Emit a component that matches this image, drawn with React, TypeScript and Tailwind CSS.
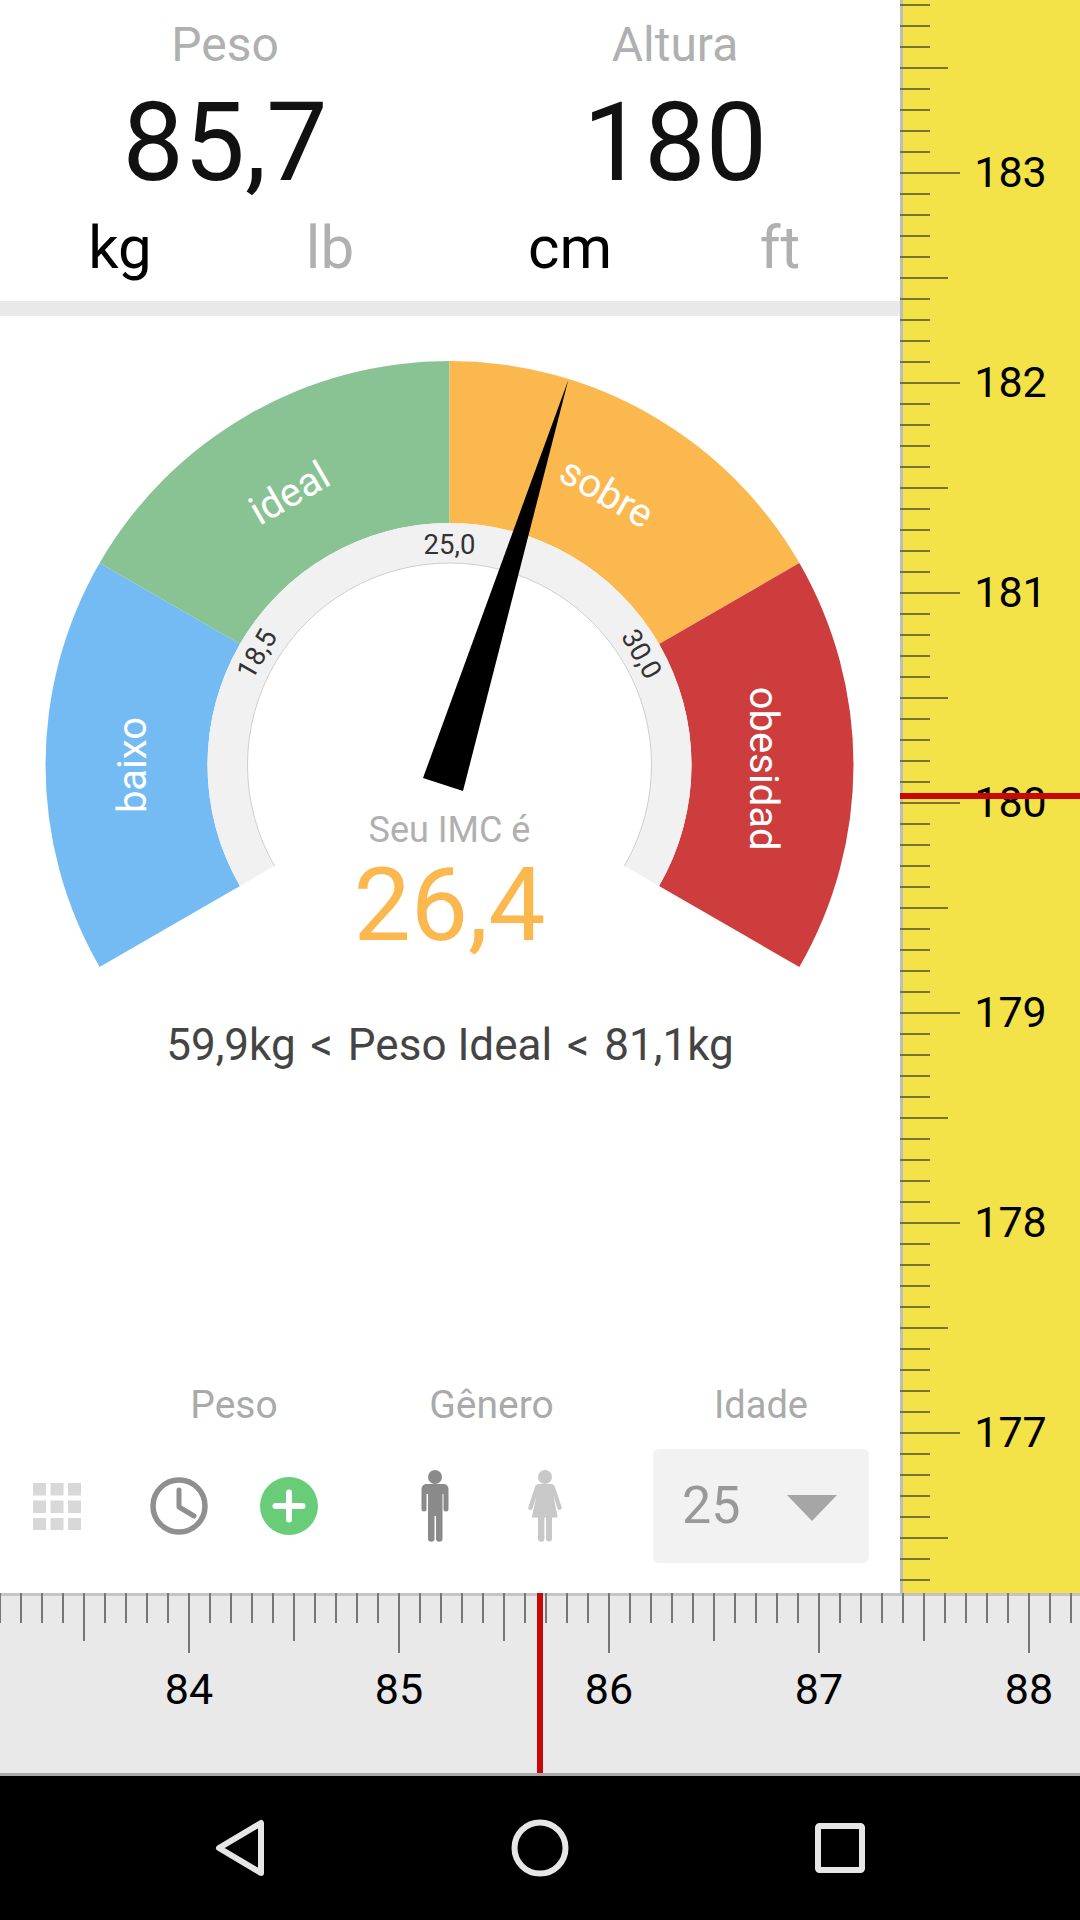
import React from "react";

const cx = 449.5;
const cy = 765;
const pt = (r: number, deg: number) => {
  const a = (deg * Math.PI) / 180;
  return [cx + r * Math.cos(a), cy - r * Math.sin(a)];
};
const sector = (r1: number, r2: number, a1: number, a2: number) => {
  const [x1, y1] = pt(r2, a1);
  const [x2, y2] = pt(r2, a2);
  const [x3, y3] = pt(r1, a2);
  const [x4, y4] = pt(r1, a1);
  const large = Math.abs(a2 - a1) > 180 ? 1 : 0;
  return `M${x1} ${y1}A${r2} ${r2} 0 ${large} 1 ${x2} ${y2}L${x3} ${y3}A${r1} ${r1} 0 ${large} 0 ${x4} ${y4}Z`;
};

const segments = [
  { from: 210, to: 150, fill: "#75bbf3" },
  { from: 150, to: 90, fill: "#89c393" },
  { from: 90, to: 30, fill: "#fab84e" },
  { from: 30, to: -30, fill: "#cd3d3d" },
];
const bandLabels = [
  { t: "baixo", a: 180, r: 304, rot: -90 },
  { t: "ideal", a: 120.5, r: 302, rot: -30 },
  { t: "sobre", a: 60, r: 301, rot: 30 },
  { t: "obesidad", a: -0.7, r: 301, rot: 90 },
];
const ringLabels = [
  { t: "18,5", a: 150, r: 213, rot: -60 },
  { t: "25,0", a: 90, r: 211, rot: 0 },
  { t: "30,0", a: 30, r: 212.5, rot: 60 },
];

function Gauge() {
  return (
    <svg width={900} height={684} viewBox="0 316 900 684" className="block">
      {segments.map((s) => (
        <path key={s.fill} d={sector(242, 404, s.from, s.to)} fill={s.fill} />
      ))}
      <path d={sector(202, 242, 210, -30)} fill="#f1f1f1" />
      <path
        d={(() => {
          const [x1, y1] = pt(202, 210);
          const [x2, y2] = pt(202, -30);
          return `M${x1} ${y1}A202 202 0 1 1 ${x2} ${y2}`;
        })()}
        fill="none"
        stroke="#cfcfcf"
        strokeWidth={1}
      />
      {bandLabels.map((l) => {
        const [x, y] = pt(l.r, l.a);
        return (
          <text
            key={l.t}
            x={x}
            y={y}
            textAnchor="middle"
            fontSize={40}
            fill="#ffffff"
            transform={`rotate(${l.rot} ${x} ${y})`}
          >
            {l.t}
          </text>
        );
      })}
      {ringLabels.map((l) => {
        const [x, y] = pt(l.r, l.a);
        return (
          <text
            key={l.t}
            x={x}
            y={y}
            textAnchor="middle"
            fontSize={27.5}
            fill="#333333"
            transform={`rotate(${l.rot} ${x} ${y})`}
          >
            {l.t}
          </text>
        );
      })}
      <polygon points="568.2,380.2 423,778 463,791" fill="#000000" />
      <text x={449.5} y={842} textAnchor="middle" fontSize={36} fill="#b0b0b0">
        Seu IMC é
      </text>
      <text x={449.5} y={940} textAnchor="middle" fontSize={102} fill="#fab84e">
        26,4
      </text>
    </svg>
  );
}

function VerticalRuler() {
  const ticks = Array.from({ length: 76 }, (_, i) => i - 8);
  return (
    <svg width={180} height={1593} viewBox="900 0 180 1593" className="block shrink-0">
      <rect x={900} y={0} width={180} height={1593} fill="#f3e348" />
      <rect x={900} y={0} width={3} height={1593} fill="#bdbdbd" />
      {ticks.map((idx) => {
        const y = 173 + 21 * idx;
        const major = idx % 10 === 0;
        const mid = !major && idx % 5 === 0;
        const end = major ? 960 : mid ? 948 : 930;
        return <rect key={idx} x={900} y={y - 1} width={end - 900} height={2} fill="#7a7430" />;
      })}
      {[183, 182, 181, 180, 179, 178, 177].map((v, i) => (
        <text key={v} x={1010.5} y={186.5 + 210 * i} textAnchor="middle" fontSize={43} fill="#000000">
          {v}
        </text>
      ))}
      <rect x={900} y={793} width={180} height={6} fill="#c80808" />
    </svg>
  );
}

function HorizontalRuler() {
  const ticks = Array.from({ length: 52 }, (_, i) => i);
  return (
    <svg width={1080} height={183} viewBox="0 1593 1080 183" className="block shrink-0">
      <rect x={0} y={1593} width={1080} height={183} fill="#e9e9e9" />
      <rect x={0} y={1593} width={1080} height={3} fill="#c4c4c4" />
      <rect x={0} y={1773} width={1080} height={3} fill="#aaaaaa" />
      {ticks.map((k) => {
        const major = (k - 9) % 10 === 0;
        const mid = !major && (k - 9) % 5 === 0;
        const end = major ? 1653 : mid ? 1641 : 1623;
        return <rect key={k} x={21 * k - 1} y={1593} width={2} height={end - 1593} fill="#777777" />;
      })}
      {[84, 85, 86, 87, 88].map((v, i) => (
        <text key={v} x={189 + 210 * i} y={1704} textAnchor="middle" fontSize={43} fill="#000000">
          {v}
        </text>
      ))}
      <rect x={537} y={1593} width={6} height={180} fill="#c80808" />
    </svg>
  );
}

function GridIcon() {
  const xs = [0, 17.5, 35];
  return (
    <svg width={48} height={47} viewBox="0 0 48 47" className="block">
      {xs.map((y) =>
        xs.map((x) => <rect key={`${x}-${y}`} x={x} y={y} width={13} height={12.5} fill="#d8d8d8" />)
      )}
    </svg>
  );
}

function ClockIcon() {
  return (
    <svg width={58} height={58} viewBox="0 0 58 58" className="block">
      <circle cx={29} cy={29} r={26} fill="none" stroke="#8f8f8f" strokeWidth={5.5} />
      <path
        d="M29 13V30L44 39"
        fill="none"
        stroke="#8f8f8f"
        strokeWidth={5}
        strokeLinecap="round"
        strokeLinejoin="round"
      />
    </svg>
  );
}

function PlusIcon() {
  return (
    <svg width={58} height={58} viewBox="0 0 58 58" className="block">
      <circle cx={29} cy={29} r={29} fill="#69cc79" />
      <path d="M29 15.5V42.5M15.5 29H42.5" stroke="#ffffff" strokeWidth={6} strokeLinecap="round" />
    </svg>
  );
}

function ManIcon() {
  return (
    <svg width={28} height={72} viewBox="421 1471 28 72" className="block">
      <circle cx={435} cy={1478} r={7} fill="#8a8a8a" />
      <path
        d="M426.5 1485H443.5a5 5 0 0 1 5 5V1510a2.5 2.5 0 0 1-5 0V1495H442.5V1539.5a3 3 0 0 1-6.5 0V1517H434.5V1539.5a3 3 0 0 1-6.5 0V1495H426.5V1510a2.5 2.5 0 0 1-5 0V1490a5 5 0 0 1 5-5Z"
        fill="#8a8a8a"
      />
    </svg>
  );
}

function WomanIcon() {
  return (
    <svg width={34} height={72} viewBox="528 1471 34 72" className="block">
      <circle cx={545} cy={1478} r={7} fill="#c8c8c8" />
      <path
        d="M539 1485H551Q554 1485 555 1488L561.6 1508a2.2 2.2 0 0 1-4 1.8L553.5 1497L557.7 1518.5H552V1539.5a3 3 0 0 1-6 0V1518.5H544.4V1539.5a3 3 0 0 1-6.4 0V1518.5H531.7L536.5 1497L532.4 1509.8a2.2 2.2 0 0 1-4-1.8L535 1488Q536 1485 539 1485Z"
        fill="#c8c8c8"
      />
    </svg>
  );
}

function NavBar() {
  return (
    <div className="flex h-[144px] shrink-0 items-center bg-black">
      <svg width={1080} height={144} viewBox="0 1776 1080 144" className="block">
        <path
          d="M261 1823V1873L219 1848Z"
          fill="none"
          stroke="#e6e6e6"
          strokeWidth={6}
          strokeLinejoin="round"
        />
        <circle cx={540} cy={1848} r={25.5} fill="none" stroke="#e6e6e6" strokeWidth={6} />
        <rect x={818} y={1826} width={44} height={44} rx={1.5} fill="none" stroke="#e6e6e6" strokeWidth={6} />
      </svg>
    </div>
  );
}

export default function App() {
  return (
    <div className="flex h-[1920px] w-[1080px] flex-col overflow-hidden bg-white font-[Roboto,sans-serif]">
      <div className="flex h-[1593px] shrink-0">
        <div className="flex w-[900px] shrink-0 flex-col">
          <div className="grid h-[301px] grid-cols-2 pt-[15px]">
            <div className="flex flex-col items-center">
              <div className="text-[48px] leading-[60px] text-[#b0b0b0]">Peso</div>
              <div className="mt-[13px] text-[109px] leading-[110px] text-[#111111]">85,7</div>
              <div className="mt-[20px] flex">
                <div className="w-[210px] text-center text-[60px] leading-[60px] text-black">kg</div>
                <div className="w-[210px] text-center text-[60px] leading-[60px] text-[#b0b0b0]">lb</div>
              </div>
            </div>
            <div className="flex flex-col items-center">
              <div className="text-[48px] leading-[60px] text-[#b0b0b0]">Altura</div>
              <div className="mt-[13px] text-[109px] leading-[110px] text-[#111111]">180</div>
              <div className="mt-[20px] flex">
                <div className="w-[210px] text-center text-[60px] leading-[60px] text-black">cm</div>
                <div className="w-[210px] text-center text-[60px] leading-[60px] text-[#b0b0b0]">ft</div>
              </div>
            </div>
          </div>
          <div className="h-[15px] shrink-0 bg-[#e9e9e9]" />
          <Gauge />
          <div className="mt-[20px] text-center text-[44px] leading-[50px] text-[#444444]">
            <span>59,9kg</span>
            <span className="mx-[4px]"> &lt; </span>
            <span>Peso Ideal</span>
            <span className="mx-[4px]"> &lt; </span>
            <span>81,1kg</span>
          </div>
          <div className="mt-auto flex items-end pb-[30px] pl-[33px]">
            <div className="flex h-[114px] items-center">
              <GridIcon />
            </div>
            <div className="ml-[69px] flex w-[168px] flex-col items-center">
              <div className="mb-[22px] text-[39px] leading-[44px] text-[#aaaaaa]">Peso</div>
              <div className="flex h-[114px] w-full items-center justify-between">
                <ClockIcon />
                <PlusIcon />
              </div>
            </div>
            <div className="ml-[103px] flex w-[141px] flex-col items-center">
              <div className="mb-[22px] text-[39px] leading-[44px] text-[#aaaaaa]">Gênero</div>
              <div className="flex h-[114px] w-full items-center justify-between">
                <ManIcon />
                <WomanIcon />
              </div>
            </div>
            <div className="ml-[91px] flex w-[216px] flex-col items-center">
              <div className="mb-[22px] text-[38px] leading-[44px] text-[#aaaaaa]">Idade</div>
              <div className="flex h-[114px] w-full items-center justify-between rounded-[6px] bg-[#f2f2f2] pl-[29px] pr-[32px]">
                <span className="text-[52px] leading-[60px] text-[#999999]">25</span>
                <svg width={50} height={26} viewBox="0 0 50 26" className="mt-[3px] block">
                  <polygon points="0,0 50,0 25,26" fill="#a6a6a6" />
                </svg>
              </div>
            </div>
          </div>
        </div>
        <VerticalRuler />
      </div>
      <HorizontalRuler />
      <NavBar />
    </div>
  );
}
